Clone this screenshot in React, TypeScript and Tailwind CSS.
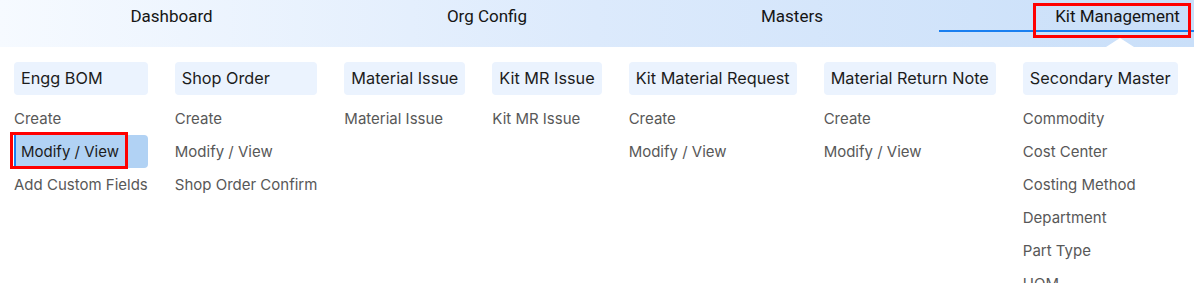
import React from 'react';

type MenuColumn = { title: string; items: string[]; active?: number };

const NAV = [
  { label: 'Dashboard', width: 'w-[315px]' },
  { label: 'Org Config', width: 'w-[316px]' },
  { label: 'Masters', width: 'w-[294px]' },
  { label: 'Kit Management', width: 'w-[357px]', active: true },
];

const COLUMNS: MenuColumn[] = [
  { title: 'Engg BOM', items: ['Create', 'Modify / View', 'Add Custom Fields'], active: 1 },
  { title: 'Shop Order', items: ['Create', 'Modify / View', 'Shop Order Confirm'] },
  { title: 'Material Issue', items: ['Material Issue'] },
  { title: 'Kit MR Issue', items: ['Kit MR Issue'] },
  { title: 'Kit Material Request', items: ['Create', 'Modify / View'] },
  { title: 'Material Return Note', items: ['Create', 'Modify / View'] },
  {
    title: 'Secondary Master',
    items: ['Commodity', 'Cost Center', 'Costing Method', 'Department', 'Part Type', 'UOM', 'Warehouse'],
  },
];

export default function App() {
  return (
    <div className="relative w-[1194px] h-[283px] overflow-hidden bg-white font-['Inter','Noto_Sans',sans-serif]">
      {/* top nav */}
      <div className="relative h-[47px] overflow-hidden bg-gradient-to-r from-[#f6faff] via-[#dceafc] to-[#c9dff9]">
        <div className="flex pl-[14px] font-['Roboto','Liberation_Sans',sans-serif] text-[17px] text-[#151515]">
          {NAV.map((n) => (
            <div
              key={n.label}
              className={`${n.width} shrink-0 h-[32px] pt-[3px] flex items-center justify-center whitespace-nowrap border-b-2 ${
                n.active ? 'border-[#1a7ff0]' : 'border-transparent'
              }`}
            >
              {n.label}
            </div>
          ))}
        </div>
        <div className="absolute left-[1106px] bottom-0 w-0 h-0 border-l-[14px] border-r-[14px] border-b-[9px] border-l-transparent border-r-transparent border-b-white" />
      </div>

      {/* mega menu */}
      <div className="flex gap-[27px] pl-[14px] pt-[15px]">
        {COLUMNS.map((col) => (
          <div key={col.title} className="flex flex-col w-max shrink-0">
            <div className="h-[33px] flex items-center px-[7px] rounded-[4px] bg-[#ebf3fe] text-[16.25px] text-[#1c1c1c] whitespace-nowrap">
              {col.title}
            </div>
            <div className="mt-[7px] flex flex-col">
              {col.items.map((it, i) =>
                col.active === i ? (
                  <div
                    key={it}
                    className="h-[33px] flex items-center pt-[1px] pl-[5px] border-l-2 border-[#1a7ff0] rounded-r-[4px] bg-[#b1d2f4] text-[15px] text-[#1c1c1c] whitespace-nowrap"
                  >
                    {it}
                  </div>
                ) : (
                  <div key={it} className="h-[33px] flex items-center pt-[1px] text-[15px] text-[#585858] whitespace-nowrap">
                    {it}
                  </div>
                )
              )}
            </div>
          </div>
        ))}
      </div>

      {/* annotation boxes */}
      <div className="absolute left-[1033px] top-[3px] w-[158px] h-[35px] border-[3px] border-[#ff0000]" />
      <div className="absolute left-[10px] top-[132px] w-[118px] h-[37px] border-[3px] border-[#ff0000]" />
    </div>
  );
}
